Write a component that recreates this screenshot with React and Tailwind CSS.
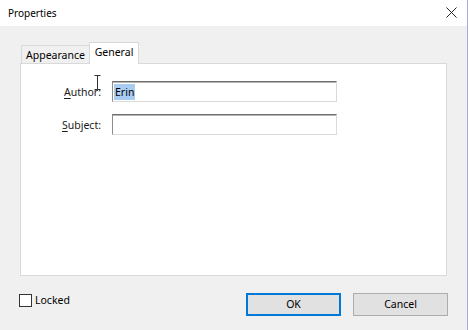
import { useState } from 'react';

const font = { fontFamily: '"Noto Sans", "Open Sans", sans-serif' };

function Field({ label, accel, value, selected }) {
  const rest = label.slice(1);
  return (
    <div className="flex items-center">
      <label className="w-[80px] text-right text-[10.5px] leading-[16px] text-[#1a1a1a]">
        <span className="underline underline-offset-2">{accel}</span>{rest}
      </label>
      <div className="ml-[11px] w-[225px] h-[21px] bg-white border border-t-[#6e6e6e] border-l-[#8c8c8c] border-r-[#dadada] border-b-[#dadada] shadow-[inset_0_1px_0_#b4b4b4] flex items-center px-px">
        {value && (
          <span className={`text-[10.5px] leading-[16px] px-px text-black ${selected ? 'bg-[#a9cdf1]' : ''}`}>{value}</span>
        )}
      </div>
    </div>
  );
}

export default function App() {
  const [tab, setTab] = useState('General');
  const [locked, setLocked] = useState(false);

  return (
    <div className="w-[468px] h-[330px] bg-[#f0f0f0] flex flex-col border-r border-[#a9a9d4] overflow-hidden" style={font}>
      {/* title bar */}
      <div className="h-[26px] bg-white flex items-center justify-between pl-[8px] pr-[10px] shrink-0">
        <span className="text-[10px] text-black">Properties</span>
        <svg width="11" height="11" viewBox="0 0 11 11" className="mt-[-2px]">
          <path d="M0.5 0.5 L10.5 10.5 M10.5 0.5 L0.5 10.5" stroke="#222" strokeWidth="1" fill="none" />
        </svg>
      </div>

      <div className="flex-1 px-[20px] pt-[16px]">
        {/* tabs */}
        <div className="flex items-end h-[21px] pl-px">
          {['Appearance', 'General'].map(t => (
            <button
              key={t}
              onClick={() => setTab(t)}
              className={
                t === tab
                  ? 'h-[22px] w-[50px] -mb-px pb-[4px] bg-white border border-b-0 border-[#d9d9d9] text-[10.5px] leading-[16px] text-black relative z-10'
                  : 'h-[18px] w-[68px] bg-[#f0f0f0] border border-b-0 border-r-0 border-[#d9d9d9] text-[10.5px] leading-[16px] text-black'
              }
            >
              {t}
            </button>
          ))}
        </div>

        {/* panel */}
        <div className="relative h-[213px] bg-white border border-[#d9d9d9] pt-[17px] flex flex-col gap-[12px]">
          <Field label="Author:" accel="A" value="Erin" selected />
          <Field label="Subject:" accel="S" />
          {/* text cursor over the label */}
          <svg width="7" height="15" viewBox="0 0 7 15" className="absolute left-[73px] top-[11px]">
            <path d="M0.5 0.5 H6.5 M3.5 0.5 V14.5 M0.5 14.5 H6.5" stroke="#333" strokeWidth="1" fill="none" />
          </svg>
        </div>

        {/* footer */}
        <div className="flex items-start justify-between mt-[17px]">
          <label className="flex items-center gap-[3px] -ml-px mt-[-1px] cursor-default">
            <span
              onClick={() => setLocked(!locked)}
              className="w-[13px] h-[13px] bg-white border border-[#333] flex items-center justify-center"
            >
              {locked && (
                <svg width="9" height="9" viewBox="0 0 9 9"><path d="M1 4.5 L3.5 7 L8 1.5" stroke="#222" strokeWidth="1.3" fill="none" /></svg>
              )}
            </span>
            <span className="text-[10.5px] leading-[16px] text-black">Locked</span>
          </label>
          <div className="flex gap-[12px] mr-[-1px]">
            <button className="w-[95px] h-[23px] bg-[#e1e1e1] border-2 border-[#0078d7] text-[10.5px] text-black">OK</button>
            <button className="w-[95px] h-[23px] bg-[#e1e1e1] border border-[#adadad] text-[10.5px] text-black">Cancel</button>
          </div>
        </div>
      </div>
    </div>
  );
}
